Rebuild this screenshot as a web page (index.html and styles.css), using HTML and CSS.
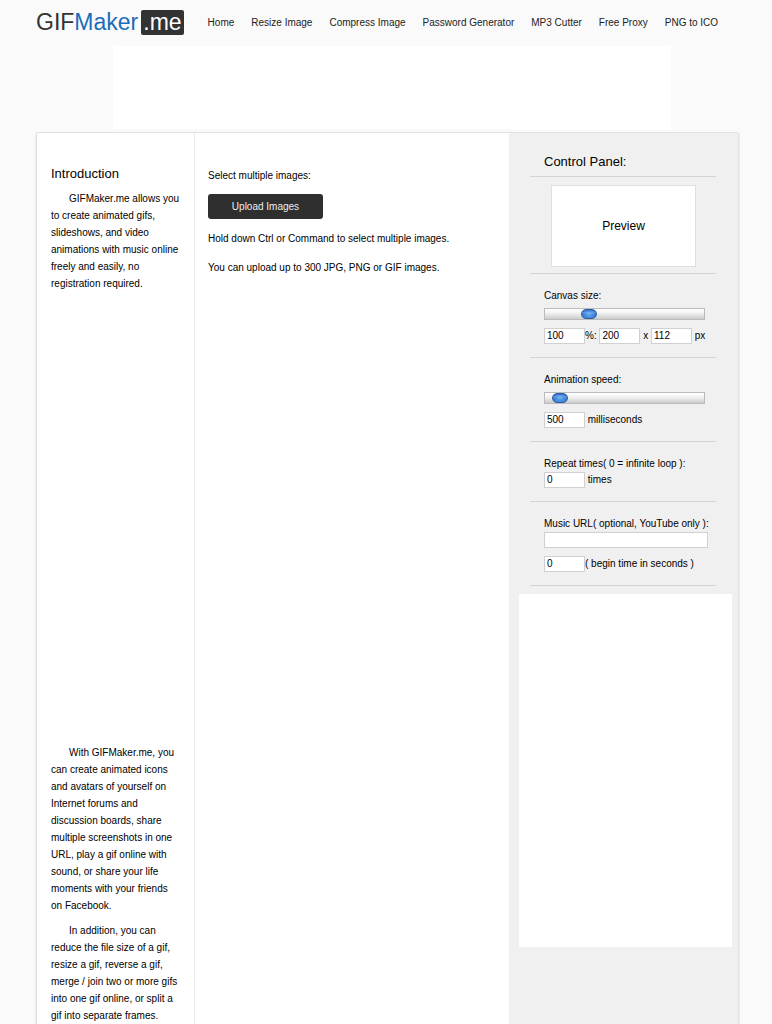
FILE: index.html
```html
<!DOCTYPE html>
<html lang="en">
<head>
  <meta charset="UTF-8" />
  <meta name="viewport" content="width=device-width, initial-scale=1" />
  <title>GIFMaker.me</title>
  <link rel="stylesheet" href="styles.css">
</head>
<body>
  <header class="header">
    <a class="logo" href="#">GIF<span class="logo-blue">Maker</span><span class="logo-box">.me</span></a>
    <nav class="nav">
      <a href="#">Home</a>
      <a href="#">Resize Image</a>
      <a href="#">Compress Image</a>
      <a href="#">Password Generator</a>
      <a href="#">MP3 Cutter</a>
      <a href="#">Free Proxy</a>
      <a href="#">PNG to ICO</a>
    </nav>
  </header>

  <div class="ad-top"></div>

  <div class="container">
    <aside class="intro">
      <h2>Introduction</h2>
      <p>GIFMaker.me allows you to create animated gifs, slideshows, and video animations with music online freely and easily, no registration required.</p>
      <div class="ad-left"></div>
      <p>With GIFMaker.me, you can create animated icons and avatars of yourself on Internet forums and discussion boards, share multiple screenshots in one URL, play a gif online with sound, or share your life moments with your friends on Facebook.</p>
      <p>In addition, you can reduce the file size of a gif, resize a gif, reverse a gif, merge / join two or more gifs into one gif online, or split a gif into separate frames.</p>
    </aside>

    <main class="content">
      <p>Select multiple images:</p>
      <button type="button" class="upload-btn">Upload Images</button>
      <p>Hold down Ctrl or Command to select multiple images.</p>
      <p>You can upload up to 300 JPG, PNG or GIF images.</p>
    </main>

    <section class="panel">
      <h2>Control Panel:</h2>

      <div class="preview-wrap">
        <div class="preview">Preview</div>
      </div>

      <!-- Canvas size -->
      <div class="group">
        <label class="title" for="sizeSlider">Canvas size:</label>
        <input type="range" class="slider" id="sizeSlider" min="0" max="100" value="25" />
        <div class="row">
          <input type="text" class="num" id="percent" value="100" /><label for="percent">%: </label><input type="text" class="num" id="width" value="200" aria-label="Width" /><label for="height"> x </label><input type="text" class="num" id="height" value="112" /> px
        </div>
      </div>

      <!-- Animation speed -->
      <div class="group">
        <label class="title" for="speedSlider">Animation speed:</label>
        <input type="range" class="slider" id="speedSlider" min="0" max="100" value="5" />
        <div class="row">
          <input type="text" class="num" id="speed" value="500" /> <label for="speed">milliseconds</label>
        </div>
      </div>

      <!-- Repeat times -->
      <div class="group">
        <label class="title" for="repeat">Repeat times( 0 = infinite loop ):</label>
        <div class="field">
          <input type="text" class="num" id="repeat" value="0" /> times
        </div>
      </div>

      <!-- Music -->
      <div class="group">
        <label class="title" for="music">Music URL( optional, YouTube only ):</label>
        <div class="field">
          <input type="text" class="url" id="music" />
        </div>
        <div class="row">
          <input type="text" class="num" id="begin" value="0" /><label for="begin">( begin time in seconds )</label>
        </div>
      </div>

      <div class="ad-right"></div>
    </section>
  </div>
</body>
</html>
```

FILE: styles.css
```css
* {
  box-sizing: border-box;
}
body {
  display: flex;
  flex-direction: column;
  min-height: 100vh;
  margin: 0;
  padding: 0 33px 0 36px;
  background-color: #fafafa;
  color: #000;
  font-family: "Liberation Sans", Arial, Helvetica, sans-serif;
  font-size: 10px;
  line-height: 17px;
}
h2 {
  margin: 0;
  font-size: 13px;
  font-weight: normal;
}
p {
  margin: 0;
}

/* Header */
.header {
  display: flex;
  align-items: center;
  gap: 24px;
  height: 44px;
}
.logo {
  display: flex;
  align-items: center;
  color: #333;
  font-size: 23px;
  line-height: 25px;
  text-decoration: none;
}
.logo-blue {
  color: #1a6dbb;
}
.logo-box {
  margin-left: 3px;
  padding: 0 2px;
  border-radius: 2px;
  background-color: #333;
  color: #fff;
}
.nav {
  display: flex;
  gap: 17px;
  white-space: nowrap;
}
.nav a {
  color: #222;
  text-decoration: none;
}

.ad-top {
  height: 83px;
  margin: 2px 68px 3px 77px;
  background-color: #fff;
}

/* Main box */
.container {
  display: flex;
  flex: 1;
  border: 1px solid #e2e2e2;
  border-bottom: none;
  border-radius: 3px 3px 0 0;
  background-color: #fff;
  box-shadow: 0 1px 2px rgba(0,0,0,0.2);
}
.intro {
  width: 158px;
  padding: 32px 14px 0;
  border-right: 1px solid #e8eeee;
}
.intro p {
  margin-top: 8px;
  text-indent: 18px;
}
.ad-left {
  height: 444px;
}
.content {
  flex: 1;
  padding: 34px 13px 0;
}
.content p + p {
  margin-top: 12px;
}
.upload-btn {
  display: block;
  width: 115px;
  height: 25px;
  margin: 10px 0 11px;
  padding: 0;
  border: none;
  border-radius: 3px;
  background-color: #2f2f2f;
  color: #eee;
  font: inherit;
  cursor: pointer;
}

/* Control panel */
.panel {
  width: 229px;
  padding-top: 20px;
  background-color: #f0f0f0;
}
.panel h2,
.preview-wrap,
.group {
  margin: 0 22px 0 21px;
  border-bottom: 1px solid #d4d4d4;
}
.panel h2 {
  padding: 0 14px 6px;
}
.preview-wrap {
  padding: 8px 20px 6px 21px;
}
.preview {
  height: 82px;
  border: 1px solid #dcdfe4;
  background-color: #fff;
  font-size: 12px;
  line-height: 80px;
  text-align: center;
}
.group {
  padding: 13px 0 13px 14px;
  white-space: nowrap;
}
.title {
  display: block;
}
.row {
  height: 16px;
  margin-top: 8px;
  line-height: 16px;
}
.row label {
  white-space: pre;
}
.field {
  height: 16px;
  line-height: 16px;
}
.num,
.url {
  height: 16px;
  padding: 0 2px;
  border: 1px solid #d0d0d0;
  background-color: #fff;
  color: #000;
  font: inherit;
  vertical-align: top;
}
.num {
  width: 41px;
}
.url {
  width: 164px;
}
.slider {
  display: block;
  -webkit-appearance: none;
  appearance: none;
  width: 161px;
  height: 12px;
  margin: 4px 0 0;
  border: 1px solid #bbb;
  background: linear-gradient(#fff, #f2f2f2 40%, #ccc);
}
.slider::-webkit-slider-thumb {
  -webkit-appearance: none;
  width: 16px;
  height: 10px;
  border: 1px solid #2a5ca8;
  border-radius: 5px;
  background: radial-gradient(ellipse at center, rgba(120,190,250,0.7), rgba(30,90,190,0.6) 75%), linear-gradient(#4f8ad8, #a8d0f8 40%, #3f85dc 50%, #7cc0fa);
}

.ad-right {
  height: 353px;
  margin: 8px 6px 0 10px;
  background-color: #fff;
}
```
